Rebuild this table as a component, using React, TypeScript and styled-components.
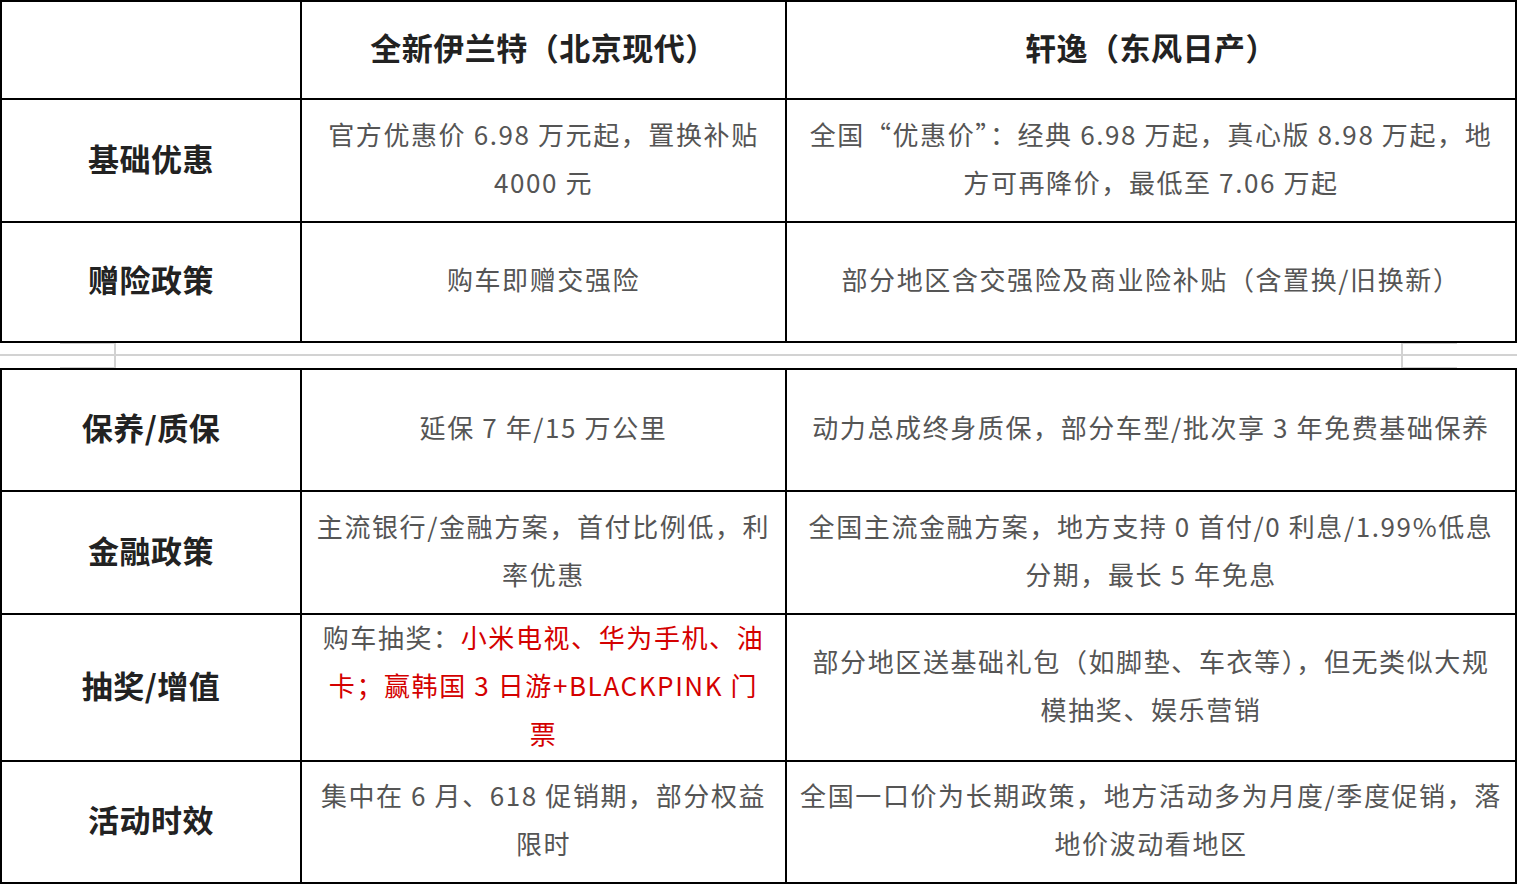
import React from "react";
import styled, { createGlobalStyle } from "styled-components";

const GlobalStyle = createGlobalStyle`
  html, body {
    margin: 0;
    padding: 0;
    background: #fff;
  }
  body {
    font-family: "Noto Sans CJK SC", "Noto Sans", sans-serif;
  }
`;

const Page = styled.div`
  display: flex;
  flex-direction: column;
  width: 1517px;
`;

// black ruled table: grid gaps act as the 2px borders
const Table = styled.div<{ $rows: string }>`
  display: grid;
  grid-template-columns: 298px 483px 728px;
  grid-template-rows: ${(p) => p.$rows};
  gap: 2px;
  padding: 2px;
  background: #000;
`;

const Cell = styled.div`
  background: #fff;
  display: flex;
  align-items: center;
  justify-content: center;
  text-align: center;
  padding: 0 10px 6px;
  font-size: 26px;
  letter-spacing: 1.6px;
  line-height: 48px;
  color: #555;
  white-space: nowrap;
`;

const HeadCell = styled(Cell)`
  font-size: 31px;
  font-weight: 700;
  letter-spacing: 0.5px;
  color: #222;
`;

const CellText = styled.p`
  margin: 0;
`;

const Hot = styled.span`
  color: #d40000;
`;

// the faint seam between the two table pieces
const Seam = styled.div`
  display: flex;
  flex-direction: column;
  height: 25px;
`;

const SeamHalf = styled.div<{ $h: number }>`
  display: flex;
  justify-content: space-between;
  height: ${(p) => p.$h}px;
  padding: 0 60px;
`;

const Stub = styled.div<{ $side: "left" | "right"; $edge: "top" | "bottom" }>`
  box-sizing: border-box;
  width: 56px;
  border-${(p) => p.$edge}: 1px solid #d2d2d2;
  border-${(p) => (p.$side === "left" ? "right" : "left")}: 2px solid #d2d2d2;
`;

const SeamRule = styled.div`
  height: 2px;
  background: #d2d2d2;
`;

type Line = React.ReactNode;
type Row = { label: string; a: Line[]; b: Line[] };

const lines = (items: Line[]) => (
  <CellText>
    {items.map((l, i) => (
      <React.Fragment key={i}>
        {i > 0 && <br />}
        {l}
      </React.Fragment>
    ))}
  </CellText>
);

const topRows: Row[] = [
  {
    label: "基础优惠",
    a: ["官方优惠价 6.98 万元起，置换补贴", "4000 元"],
    b: ["全国“优惠价”：经典 6.98 万起，真心版 8.98 万起，地", "方可再降价，最低至 7.06 万起"],
  },
  {
    label: "赠险政策",
    a: ["购车即赠交强险"],
    b: ["部分地区含交强险及商业险补贴（含置换/旧换新）"],
  },
];

const bottomRows: Row[] = [
  {
    label: "保养/质保",
    a: ["延保 7 年/15 万公里"],
    b: ["动力总成终身质保，部分车型/批次享 3 年免费基础保养"],
  },
  {
    label: "金融政策",
    a: ["主流银行/金融方案，首付比例低，利", "率优惠"],
    b: ["全国主流金融方案，地方支持 0 首付/0 利息/1.99%低息", "分期，最长 5 年免息"],
  },
  {
    label: "抽奖/增值",
    a: [
      <>
        购车抽奖：<Hot>小米电视、华为手机、油</Hot>
      </>,
      <Hot>卡；赢韩国 3 日游+BLACKPINK 门</Hot>,
      <Hot>票</Hot>,
    ],
    b: ["部分地区送基础礼包（如脚垫、车衣等），但无类似大规", "模抽奖、娱乐营销"],
  },
  {
    label: "活动时效",
    a: ["集中在 6 月、618 促销期，部分权益", "限时"],
    b: ["全国一口价为长期政策，地方活动多为月度/季度促销，落", "地价波动看地区"],
  },
];

const renderRows = (rows: Row[]) =>
  rows.map((r) => (
    <React.Fragment key={r.label}>
      <HeadCell>{r.label}</HeadCell>
      <Cell>{lines(r.a)}</Cell>
      <Cell>{lines(r.b)}</Cell>
    </React.Fragment>
  ));

export default function App() {
  return (
    <>
      <GlobalStyle />
      <Page>
        <Table $rows="96px 121px 118px">
          <HeadCell />
          <HeadCell>全新伊兰特（北京现代）</HeadCell>
          <HeadCell>轩逸（东风日产）</HeadCell>
          {renderRows(topRows)}
        </Table>
        <Seam>
          <SeamHalf $h={11}>
            <Stub $side="left" $edge="top" />
            <Stub $side="right" $edge="top" />
          </SeamHalf>
          <SeamRule />
          <SeamHalf $h={12}>
            <Stub $side="left" $edge="bottom" />
            <Stub $side="right" $edge="bottom" />
          </SeamHalf>
        </Seam>
        <Table $rows="120px 121px 145px 120px">{renderRows(bottomRows)}</Table>
      </Page>
    </>
  );
}
